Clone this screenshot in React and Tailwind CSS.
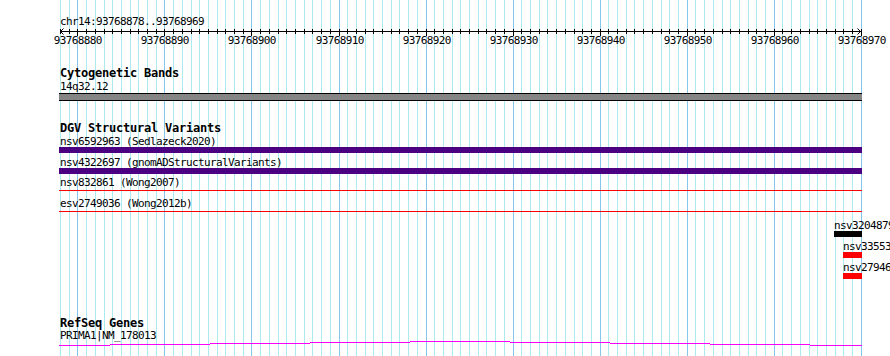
import React from 'react';

const START = 93768878;
// one grid column per base, 8.704px apart
const cols = Array.from({ length: 93 }, (_, i) => ({
  pos: START + i,
  x: Math.round(60 + i * 8.704),
}));

const geneSegments = [
  [59, 110, 4], [110, 210, 3], [210, 310, 2], [310, 410, 1], [410, 510, 0],
  [510, 610, 1], [610, 710, 2], [710, 810, 3], [810, 862, 4],
];

const Grid = () => (
  <svg className="absolute inset-0" width="890" height="356" shapeRendering="crispEdges">
    {cols.map((c) => (
      <rect key={c.pos} x={c.x} y="0" width="1" height="356" fill={c.pos % 10 === 0 ? '#86c6ec' : '#aaeaf0'} />
    ))}
  </svg>
);

const Ruler = () => (
  <svg width="890" height="20" className="block">
    <g shapeRendering="crispEdges">
      <rect x="60" y="4" width="802" height="1" fill="#000" />
      {cols.map((c) => (
        <rect key={c.pos} x={c.x} y="2" width="1" height={c.pos % 10 === 0 ? 7 : 5} fill="#000" />
      ))}
    </g>
    <path d="M63.5 1.5 L60.5 4.5 L63.5 7.5" fill="none" stroke="#000" strokeWidth="1" />
    <path d="M857.5 1.5 L860.5 4.5 L857.5 7.5" fill="none" stroke="#000" strokeWidth="1" />
    {cols.filter((c) => c.pos % 10 === 0).map((c) => (
      <text key={c.pos} x={c.x + 0.8} y="16.5" textAnchor="middle" fontFamily="'DejaVu Sans Mono', monospace" fontSize="11" letterSpacing="-0.62" fill="#000">
        {c.pos}
      </text>
    ))}
  </svg>
);

const Title = ({ children, className = '' }) => (
  <div className={`pl-[60px] text-[12px] tracking-[-0.22px] font-bold leading-[13px] ${className}`}>{children}</div>
);

const Label = ({ children, className = '' }) => (
  <div className={`whitespace-nowrap text-[11px] tracking-[-0.62px] leading-[11px] ${className}`}>{children}</div>
);

export default function App() {
  return (
    <div className="relative w-[890px] h-[356px] overflow-hidden bg-white text-black font-['DejaVu_Sans_Mono','Liberation_Mono',monospace]">
      <Grid />
      <div className="relative flex flex-col">
        <div className="pl-[60px] pt-[16px] text-[11px] tracking-[-0.62px] leading-[11px]">chr14:93768878..93768969</div>
        <Ruler />

        {/* Cytogenetic Bands */}
        <Title className="mt-[20px]">Cytogenetic Bands</Title>
        <Label className="pl-[60px] mt-[1px]">14q32.12</Label>
        <div className="ml-[59px] mt-[1px] w-[803px] h-[8px] bg-[#858585] border-y border-black" />

        {/* DGV Structural Variants */}
        <Title className="mt-[21px]">DGV Structural Variants</Title>
        <Label className="pl-[60px] mt-[1px]">nsv6592963 (Sedlazeck2020)</Label>
        <div className="ml-[59px] w-[803px] h-[6px] bg-[#4b0082]" />
        <Label className="pl-[60px] mt-[4px]">nsv4322697 (gnomADStructuralVariants)</Label>
        <div className="ml-[59px] w-[803px] h-[6px] bg-[#4b0082]" />
        <Label className="pl-[60px] mt-[3px]">nsv832861 (Wong2007)</Label>
        <div className="ml-[59px] mt-[2px] w-[803px] h-px bg-[#ff0000]" />
        <Label className="pl-[60px] mt-[7px]">esv2749036 (Wong2012b)</Label>
        <div className="ml-[59px] mt-[2px] w-[803px] h-px bg-[#ff0000]" />

        <Label className="pl-[834px] mt-[8px]">nsv3204879</Label>
        <div className="ml-[834px] w-[28px] h-[6px] bg-black" />
        <Label className="pl-[843px] mt-[4px]">nsv33553</Label>
        <div className="ml-[843px] w-[19px] h-[6px] bg-[#ff0000]" />
        <Label className="pl-[843px] mt-[4px]">nsv27946</Label>
        <div className="ml-[843px] w-[19px] h-[6px] bg-[#ff0000]" />

        {/* RefSeq Genes */}
        <Title className="mt-[38px]">RefSeq Genes</Title>
        <Label className="pl-[60px]">PRIMA1|NM_178013</Label>
        <svg width="890" height="7" className="block" shapeRendering="crispEdges">
          {geneSegments.map(([x1, x2, y]) => (
            <rect key={x1} x={x1} y={y} width={x2 - x1} height="1" fill="#ff00ff" />
          ))}
        </svg>
      </div>
    </div>
  );
}
